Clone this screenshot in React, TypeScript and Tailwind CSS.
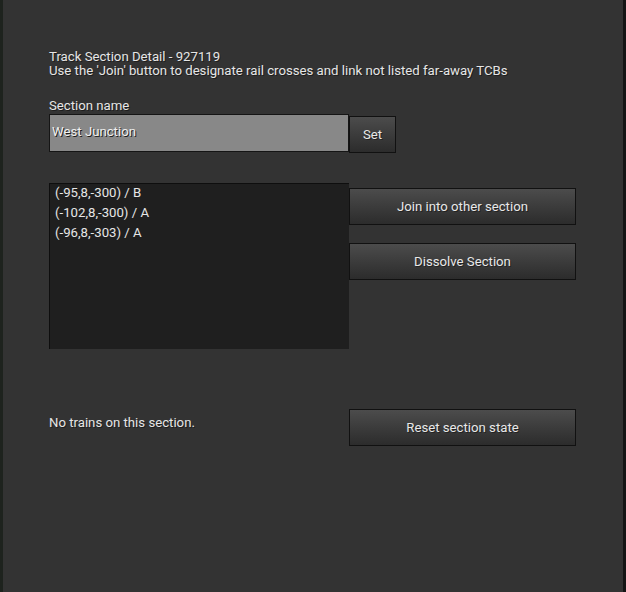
import React from "react";

const btn =
  "flex items-center justify-center border border-[#111] bg-gradient-to-b from-[#4c4c4c] to-[#2c2c2c] text-[13.2px] text-[#e8e8e8] [text-shadow:1px_1px_0_#222]";

const nodes = ["(-95,8,-300) / B", "(-102,8,-300) / A", "(-96,8,-303) / A"];

export default function App() {
  return (
    <div className="w-[626px] h-[592px] bg-[#333333] border-l-[3px] border-l-[#1e231e] border-r-[3px] border-r-[#151515] font-['Roboto',sans-serif] text-[13.2px] text-[#e6e6e6] [text-shadow:1px_1px_0_#1e1e1e]">
      <div className="pl-[46px] pt-[50px] leading-[14px]">
        <p>Track Section Detail - 927119</p>
        <p>Use the 'Join' button to designate rail crosses and link not listed far-away TCBs</p>
      </div>

      <div className="pl-[46px] pt-[21px]">
        <p className="leading-[14px] mb-[1px]">Section name</p>
        <div className="flex items-start">
          <div className="w-[300px] h-[38px] bg-[#888888] border border-[#151515] flex items-center pl-[2px] pb-[3px] text-[#f0f0f0]">
            West Junction
          </div>
          <button className={`${btn} w-[47px] h-[37px] mt-[2px]`}>Set</button>
        </div>
      </div>

      <div className="pl-[46px] pt-[30px] flex">
        <div className="w-[300px] h-[166px] bg-[#1f1f1f] border-t border-l border-[#0e0e0e] pl-[5px]">
          <div className="-mt-[1px]">
            {nodes.map((n) => (
              <p key={n} className="leading-[20px]">
                {n}
              </p>
            ))}
          </div>
        </div>
        <div className="flex flex-col gap-[18px] pt-[5px]">
          <button className={`${btn} w-[227px] h-[37px]`}>Join into other section</button>
          <button className={`${btn} w-[227px] h-[37px]`}>Dissolve Section</button>
        </div>
      </div>

      <div className="pl-[46px] pt-[60px] flex items-start">
        <p className="w-[300px] pt-[7px] leading-[14px]">No trains on this section.</p>
        <button className={`${btn} w-[227px] h-[37px]`}>Reset section state</button>
      </div>
    </div>
  );
}
